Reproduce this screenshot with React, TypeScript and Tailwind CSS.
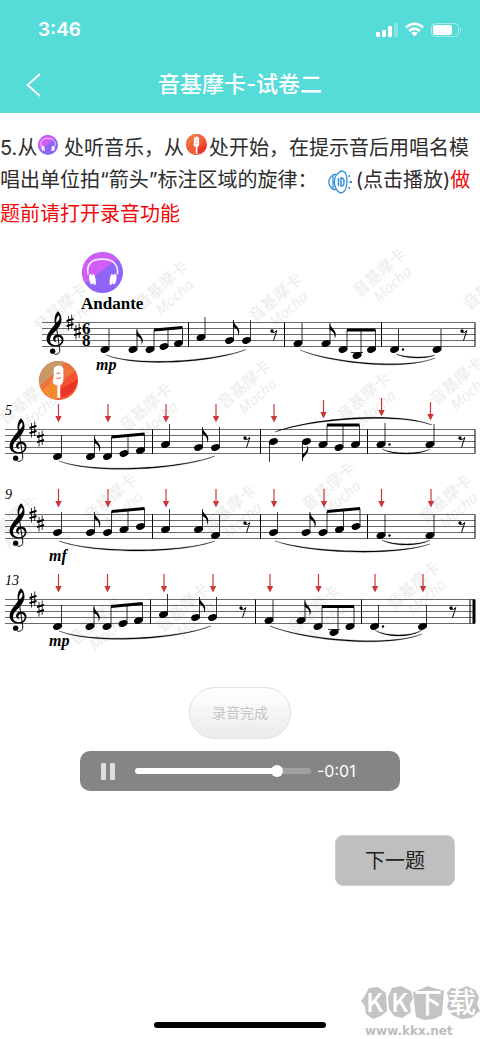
import { useState } from "react";

type Note = {
  x: number;
  step: number;
  top?: number;
  flag?: boolean;
  down?: boolean;
  dot?: boolean;
};
type Beam = { notes: [number, number][]; from: number; to: number };
type Curve = [number, number, number, number, number];
type Staff = {
  left: number;
  top: number;
  bars: number[];
  notes: Note[];
  beams: Beam[];
  rests: number[];
  curves: Curve[];
  arrows: [number, number][];
  final?: boolean;
};

const STAVES: Staff[] = [
  {
    left: 42,
    top: 321.5,
    bars: [188.5, 284.5, 381.5, 475],
    notes: [
      { x: 105, step: 9, top: 328 },
      { x: 133, step: 9, top: 328, flag: true },
      { x: 201, step: 5, top: 316 },
      { x: 229.5, step: 6, top: 319, flag: true },
      { x: 246.5, step: 6, top: 319 },
      { x: 298, step: 7, top: 322 },
      { x: 326, step: 7, top: 322, flag: true },
      { x: 394.5, step: 9, top: 328, dot: true },
      { x: 437, step: 9, top: 328 },
    ],
    beams: [
      { notes: [[150, 9], [164, 8], [178.5, 7]], from: 329, to: 326.5 },
      { notes: [[343, 9], [357, 11], [371.5, 9]], from: 329, to: 329 },
    ],
    rests: [274, 464],
    curves: [
      [106, 354, 246, 348.5, 361],
      [300, 349, 435, 357, 363],
      [396, 353, 435, 354, 357],
    ],
    arrows: [],
  },
  {
    left: 5,
    top: 428.5,
    bars: [152.5, 260.5, 367.5, 475],
    notes: [
      { x: 57.5, step: 9, top: 434 },
      { x: 90.5, step: 9, top: 435, flag: true },
      { x: 165.5, step: 5, top: 423 },
      { x: 198.5, step: 6, top: 426, flag: true },
      { x: 215.5, step: 6, top: 426 },
      { x: 273.5, step: 4, top: 461, down: true },
      { x: 306.5, step: 4, top: 460, down: true, flag: true },
      { x: 381, step: 5, top: 422, dot: true },
      { x: 430, step: 5, top: 423 },
    ],
    beams: [
      { notes: [[107.5, 9], [124, 8], [140.5, 7]], from: 436, to: 433 },
      { notes: [[323, 5], [339, 6], [355.5, 5]], from: 424, to: 424 },
    ],
    rests: [247, 462],
    curves: [
      [59, 460, 215, 455, 468],
      [275, 431, 432, 424, 417],
      [382, 448, 430, 448, 453],
    ],
    arrows: [[58.5, 403], [108, 403], [166, 403], [216, 403], [274, 403], [323.5, 399], [381.5, 397], [430.5, 401]],
  },
  {
    left: 5,
    top: 513.5,
    bars: [152.5, 260.5, 367.5, 475],
    notes: [
      { x: 57.5, step: 6, top: 511 },
      { x: 90.5, step: 6, top: 511, flag: true },
      { x: 165.5, step: 5, top: 508 },
      { x: 198.5, step: 5, top: 508, flag: true },
      { x: 215.5, step: 7, top: 514 },
      { x: 273.5, step: 6, top: 511 },
      { x: 306, step: 6, top: 511, flag: true },
      { x: 381, step: 7, top: 514, dot: true },
      { x: 430, step: 7, top: 514 },
    ],
    beams: [
      { notes: [[107.5, 6], [124, 5], [140.5, 4]], from: 510.5, to: 507.5 },
      { notes: [[323, 6], [339.5, 5], [356, 4]], from: 510.5, to: 507.5 },
    ],
    rests: [247, 462],
    curves: [
      [59, 540, 215, 540, 550],
      [275, 540, 430, 543, 551],
      [382, 539, 430, 539, 544],
    ],
    arrows: [[58.5, 488], [108, 488], [166, 488], [216, 488], [274, 488], [324, 488], [381.5, 488], [431, 488]],
  },
  {
    left: 5,
    top: 598.5,
    bars: [150.5, 255.5, 361.5, 470],
    notes: [
      { x: 57.5, step: 9, top: 604 },
      { x: 90, step: 9, top: 605, flag: true },
      { x: 163.5, step: 5, top: 593 },
      { x: 195.5, step: 6, top: 596, flag: true },
      { x: 212.5, step: 6, top: 596 },
      { x: 269, step: 7, top: 599 },
      { x: 301, step: 7, top: 599, flag: true },
      { x: 374.5, step: 9, top: 604, dot: true },
      { x: 422.5, step: 9, top: 604 },
    ],
    beams: [
      { notes: [[107, 9], [123, 8], [138.5, 7]], from: 605.5, to: 602.5 },
      { notes: [[318, 9], [334, 11], [350, 9]], from: 605.5, to: 605.5 },
    ],
    rests: [243, 453],
    curves: [
      [59, 630, 211, 625, 638],
      [270, 625, 422, 633, 640],
      [375, 629, 422, 629, 635],
    ],
    arrows: [[58.5, 573], [107.5, 573], [164, 573], [213, 573], [270, 573], [318.5, 573], [375, 573], [423, 573]],
    final: true,
  },
];

const WATERMARKS = [
  [42, 322], [143, 300], [257, 312], [361, 287], [471, 300],
  [7, 415], [127, 422], [226, 399], [345, 411], [438, 395],
  [-8, 535], [92, 512], [211, 523], [310, 501], [427, 513],
  [77, 635], [164, 622], [295, 624], [395, 600],
];

const Headphones = () => (
  <>
    <circle cx="20" cy="20" r="20" fill="#8f64f6" />
    <path d="M3 30.500A20 20 0 0 1 35 6.800Z" fill="#d05df5" />
    <path d="M5.800 22C4 10 11 7 20 7s16 4 14.500 15" fill="none" stroke="#f3e8ff" strokeWidth="1.600" />
    <ellipse cx="9" cy="26.500" rx="2" ry="5" fill="#fff" transform="rotate(-8 9 26.500)" />
    <ellipse cx="11.800" cy="27" rx="1.500" ry="5.500" fill="#fff" transform="rotate(-8 12 27)" />
    <ellipse cx="31.500" cy="26.500" rx="2" ry="5" fill="#fff" transform="rotate(8 31.500 26.500)" />
    <ellipse cx="28.600" cy="27" rx="1.500" ry="5.500" fill="#fff" transform="rotate(8 28.500 27)" />
  </>
);

const Microphone = ({ plain = false }: { plain?: boolean }) => (
  <>
    <circle cx="20" cy="20" r="20" fill={plain ? "#ef4b2f" : "#f4522e"} />
    <path d="M1 26A20 20 0 0 1 28 1.700Z" fill={plain ? "#f0733f" : "#c99a66"} />
    <path d="M1 26L27 2a20 20 0 0 1 10 8L8 36Z" fill={plain ? "#f0613a" : "#ee7140"} />
    <path d="M3 30L19 17V40Q9 39 3 30Z" fill={plain ? "#f0613a" : "#f68a2f"} />
    <path d="M19 37A20 20 0 0 0 40 19L22 29Z" fill="#e93328" />
    <path
      d="M17.500 5.500Q23 3 25 8V18Q25 23 21.800 25V38h-3V25Q14 24 14 20l1-4V9Q15 7 17.500 5.500Z"
      fill="#fff"
    />
    <path d="M18 13l4-1M18 17.500q2 1.500 4.500-1" fill="none" stroke="#ef7558" strokeWidth="1.200" />
  </>
);

const Speaker = () => (
  <svg viewBox="0 0 24 24" className="h-6 w-6" fill="none" stroke="#3391d9" strokeWidth="1.300">
    <path d="M8.500 4.500H5.500Q.8 8 .8 12t4.500 7.500h3L12 23q6.500 0 7-11T13 1Z" />
    <path d="M8.500 4.500Q4 12 8.500 19.500M5 5v14" />
    <path d="M10.500 8v8M13 8v8q3 .5 3-4T13 8Z" strokeWidth="1.500" />
    <path d="M20.500 6H22M21.500 12H24M20.500 18H22" strokeWidth="1.800" />
  </svg>
);

const Clef = () => (
  <g transform="scale(.3333)">
    <path
      fillRule="evenodd"
      d="M63-34C73-26 77-8 70 6C62 24 44 32 40 46C36 60 44 68 56 68C69 68 75 60 74 52C72 43 62 41 58 45C53 49 54 56 60 60C49 58 46 50 50 43C55 34 74 33 79 47C82 62 70 73 54 72C38 71 27 62 29 46C32 26 52 12 54 3C51-10 53-25 63-34ZM66-22C58-17 57-8 58 1C67-6 70-14 66-22Z"
    />
    <path d="M56 0L68 78C70 92 62 97 52 95" fill="none" stroke="#000" strokeWidth="3" />
    <circle cx="47" cy="86" r="8" />
  </g>
);

const Sharp = ({ x, y }: { x: number; y: number }) => (
  <g transform={`translate(${x} ${y})`} stroke="#000" fill="none">
    <path d="M-1.500-6.500V8M1.700-8V6.500" strokeWidth="0.800" />
    <path d="M-3.500-1.500L3.500-3.700M-3.500 3.700L3.500 1.500" strokeWidth="1.900" />
  </g>
);

const Head = ({ x, y }: { x: number; y: number }) => (
  <ellipse cx={x} cy={y} rx="4.600" ry="3.100" transform={`rotate(-20 ${x} ${y})`} />
);

// filled crescent, thickest in the middle
const arc = ([x1, y1, x2, y2, peak]: Curve) => {
  const bend = ((peak - (y1 + y2) / 2) * 4) / 3;
  const thick = bend > 0 ? -1.5 : 1.5;
  const a = x1 + (x2 - x1) * 0.22;
  const b = x2 - (x2 - x1) * 0.22;
  return `M${x1} ${y1}C${a} ${y1 + bend} ${b} ${y2 + bend} ${x2} ${y2}C${b} ${y2 + bend + thick} ${a} ${y1 + bend + thick} ${x1} ${y1}Z`;
};

const StaffLine = ({ staff }: { staff: Staff }) => {
  const { left, top } = staff;
  const yOf = (step: number) => top + step * 3;
  return (
    <g>
      {[0, 6, 12, 18, 24].map((dy) => (
        <path key={dy} d={`M${left} ${top + dy}H475`} stroke="#444" strokeWidth="0.800" />
      ))}
      {staff.bars.map((x) => (
        <path key={x} d={`M${x} ${top}v24`} stroke="#000" />
      ))}
      {staff.final && <path d={`M474 ${top}v24`} stroke="#000" strokeWidth="3" />}
      <g transform={`translate(${left - 5} ${top})`}>
        <Clef />
      </g>
      <Sharp x={left + 28} y={top} />
      <Sharp x={left + 35.5} y={top + 9} />
      {staff.notes.map(({ x, step, top: end = 0, flag, down, dot }) => {
        const stem = down ? x - 4 : x + 4;
        return (
          <g key={x}>
            <Head x={x} y={yOf(step)} />
            <path d={`M${stem} ${yOf(step)}V${end}`} stroke="#000" strokeWidth="0.800" />
            {flag && (
              <path
                transform={`translate(${stem} ${end}) scale(1 ${down ? -1 : 1})`}
                d="M-.4 0C.5 5 6 7 5.800 12Q5.500 14.500 4.500 16C5.500 11 3 8-.4 7Z"
              />
            )}
            {dot && <circle cx={x + 8.500} cy={yOf(step)} r="1.200" />}
          </g>
        );
      })}
      {staff.beams.map(({ notes, from, to }) => {
        const start = notes[0][0] + 4;
        const end = notes[2][0] + 4;
        return (
          <g key={start}>
            {notes.map(([x, step]) => (
              <g key={x}>
                <Head x={x} y={yOf(step)} />
                <path
                  d={`M${x + 4} ${yOf(step)}V${from + ((to - from) * (x + 4 - start)) / (end - start)}`}
                  stroke="#000"
                  strokeWidth="0.800"
                />
                {step > 9 && <path d={`M${x - 6} ${top + 30}h12`} stroke="#000" strokeWidth="0.800" />}
              </g>
            ))}
            <path d={`M${start} ${from - 1.5}L${end} ${to - 1.5}v3L${start} ${from + 1.5}Z`} />
          </g>
        );
      })}
      {staff.rests.map((x) => (
        <g key={x} transform={`translate(${x} ${top + 12})`}>
          <circle cx="-2" cy="-3.500" r="1.700" />
          <path d="M-2.500-2.500Q1-1 2.800-4L-.5 6" fill="none" stroke="#000" />
        </g>
      ))}
      {staff.curves.map((c) => (
        <path key={c.join()} d={arc(c)} stroke="#000" strokeWidth="0.300" />
      ))}
      {staff.arrows.map(([x, y]) => (
        <path
          key={x}
          d={`M${x - 0.6} ${y}h1.200v12h2.600L${x} ${y + 18.5}l-3.200-6.500h2.600Z`}
          fill="#c8373a"
        />
      ))}
    </g>
  );
};

const Score = () => (
  <svg viewBox="0 240 480 420" className="block w-full" role="img" aria-label="Andante">
    <g fill="#ececec">
      {WATERMARKS.map(([x, y]) => (
        <g key={`${x},${y}`} transform={`translate(${x} ${y}) rotate(-41)`}>
          <text x="-8" y="6" className="font-['Noto_Sans_CJK_SC',sans-serif] text-[16px]">音基摩卡</text>
          <text x="4" y="23" className="font-['Open_Sans',sans-serif] text-[15px] italic">Mocha</text>
        </g>
      ))}
    </g>
    {STAVES.map((staff) => (
      <StaffLine key={staff.top} staff={staff} />
    ))}
    <svg x="82" y="251" width="41" height="41" viewBox="0 0 40 40">
      <Headphones />
    </svg>
    <svg x="39" y="360" width="39" height="39" viewBox="0 0 40 40">
      <Microphone />
    </svg>
    <g className="font-['Liberation_Serif',serif]">
      <text x="81" y="308" className="text-[17px] font-bold">Andante</text>
      <text x="82" y="333" className="text-[17px] font-bold">6</text>
      <text x="82" y="345" className="text-[17px] font-bold">8</text>
      <g className="text-[16px] font-bold italic">
        <text x="96" y="369">mp</text>
        <text x="49" y="560">mf</text>
        <text x="49" y="645">mp</text>
      </g>
      <g className="text-[14px] italic">
        <text x="5" y="414">5</text>
        <text x="5" y="498">9</text>
        <text x="5" y="584">13</text>
      </g>
    </g>
  </svg>
);

const StatusBar = () => (
  <div className="flex h-[60px] items-center justify-between pr-[18px] pl-[38px]">
    <span className="text-[19px] font-semibold">3:46</span>
    <svg viewBox="0 0 88 16" className="h-4 w-[88px]" fill="#fff">
      <rect x="2" y="10" width="4" height="5" rx="1" />
      <rect x="8" y="8" width="4" height="7" rx="1" />
      <rect x="14" y="4" width="4" height="11" rx="1" />
      <rect x="20" y="1" width="4" height="14" rx="1" opacity=".3" />
      <g fill="none" stroke="#fff" strokeWidth="2.600">
        <path d="M32 5.500Q40.500-2 49 5.500" />
        <path d="M35.200 9Q40.500 4.400 45.800 9" />
      </g>
      <path d="M37.200 11Q40.500 8.300 43.800 11L40.500 14.500Z" />
      <rect x="57.500" y="1.500" width="27" height="13" rx="4" fill="none" stroke="#fff" opacity=".45" />
      <rect x="59" y="3" width="19" height="10" rx="2.500" />
      <path d="M86 6q2 2 0 4Z" opacity=".5" />
    </svg>
  </div>
);

const Header = () => (
  <header className="bg-[#55dcd8] text-white">
    <StatusBar />
    <div className="grid h-[53px] grid-cols-[64px_1fr_64px] items-center pb-1">
      <button type="button" aria-label="返回" className="flex h-full items-center pl-[26px]">
        <svg viewBox="0 0 16 24" className="h-6 w-4" fill="none" stroke="#fff" strokeWidth="1.800">
          <path d="M14 1L1.500 12L14 23" />
        </svg>
      </button>
      <h1 className="text-center text-[22px] font-medium">音基摩卡-试卷二</h1>
    </div>
  </header>
);

const Question = () => (
  <p className="pt-5 pr-1 text-xl leading-[30px] text-[#2d2d2d]">
    5.从
    <svg viewBox="0 0 40 40" className="mb-2.5 ml-px inline-block h-5 w-5 align-middle">
      <Headphones />
    </svg>{" "}
    处听音乐，从
    <svg viewBox="0 0 40 40" className="mx-0.5 mb-2.5 inline-block h-[21px] w-[21px] align-middle">
      <Microphone plain />
    </svg>
    处开始，在提示音后用唱名模唱出单位拍“箭头”标注区域的旋律：
    <button type="button" aria-label="播放" className="mr-1 ml-2.5 inline-flex h-[31px] items-start pt-0.5 align-text-top">
      <Speaker />
    </button>
    (点击播放)<span className="text-[#f5060a]">做题前请打开录音功能</span>
  </p>
);

const Player = () => {
  const [position, setPosition] = useState(83);
  const filled = position * 0.94 + 3;
  return (
    <div className="mt-3 flex h-10 w-80 items-center rounded-[10px] bg-[#858585] pl-[21px] text-white">
      <button type="button" aria-label="暂停" className="mr-5 flex gap-1">
        <span className="h-[17px] w-[5px] rounded-[1px] bg-[#dedede]" />
        <span className="h-[17px] w-[5px] rounded-[1px] bg-[#dedede]" />
      </button>
      <input
        type="range"
        aria-label="播放进度"
        value={position}
        onChange={(e) => setPosition(Number(e.target.value))}
        style={{ backgroundImage: `linear-gradient(to right, #fff ${filled}%, #a0a0a0 ${filled}%)` }}
        className="h-1.5 w-44 appearance-none rounded-full [&::-webkit-slider-thumb]:h-3 [&::-webkit-slider-thumb]:w-3 [&::-webkit-slider-thumb]:appearance-none [&::-webkit-slider-thumb]:rounded-full [&::-webkit-slider-thumb]:bg-white"
      />
      <span className="ml-[6px] text-base">-0:01</span>
    </div>
  );
};

const SiteMark = () => (
  <svg viewBox="0 0 120 56" className="absolute right-0 bottom-0 h-14 w-[120px]">
    <g fill="#c4c4c4">
      <path d="M4 14L9 5l9-1 8 6 1 18-6 5-8 3-7-5-1-8-4-5Z" />
      <path d="M28 14l4-9 9-2 10 5 2 7-3 6 1 8-9 6-8-2-5-7Z" />
      <path d="M53 9l8-3 7-3 6 2 10 3-2 24-8 4-10 1-8-3Z" />
      <path d="M87 10l4-5 9 1 7-3 8 4 4 7-2 7 3 7-9 7-10 1-9-4-5-8 2-7Z" />
    </g>
    <g fill="#fff" className="font-['Noto_Sans_CJK_SC',sans-serif] font-medium">
      <g className="text-[26px]">
        <text x="6" y="29">K</text>
        <text x="31" y="29">K</text>
      </g>
      <g className="text-[28px]">
        <text x="54" y="30">下</text>
        <text x="88" y="30">载</text>
      </g>
    </g>
    <text x="5" y="52" fill="#bdbdbd" className="font-['DejaVu_Sans',sans-serif] text-[12px] font-bold">
      www.kkx.net
    </text>
  </svg>
);

export default function App() {
  return (
    <div className="relative flex min-h-screen flex-col bg-white font-['Inter','Noto_Sans_CJK_SC',sans-serif]">
      <Header />
      <Question />
      <main className="mt-3 flex flex-col items-center">
        <Score />
        <button
          type="button"
          disabled
          className="mt-[26px] h-[52px] w-[102px] rounded-full border border-[#e2e2e2] bg-linear-to-b from-white to-[#ebebeb] text-sm text-[#c6c6c6]"
        >
          录音完成
        </button>
        <Player />
        <button
          type="button"
          className="mt-11 mr-[25px] h-[51px] w-[120px] self-end rounded-lg border border-[#cfcfcf] bg-[#bfbfbf] text-xl text-[#222]"
        >
          下一题
        </button>
      </main>
      <div className="mt-auto mb-[11px] h-1.5 w-[172px] self-center rounded-full bg-black" />
      <SiteMark />
    </div>
  );
}
